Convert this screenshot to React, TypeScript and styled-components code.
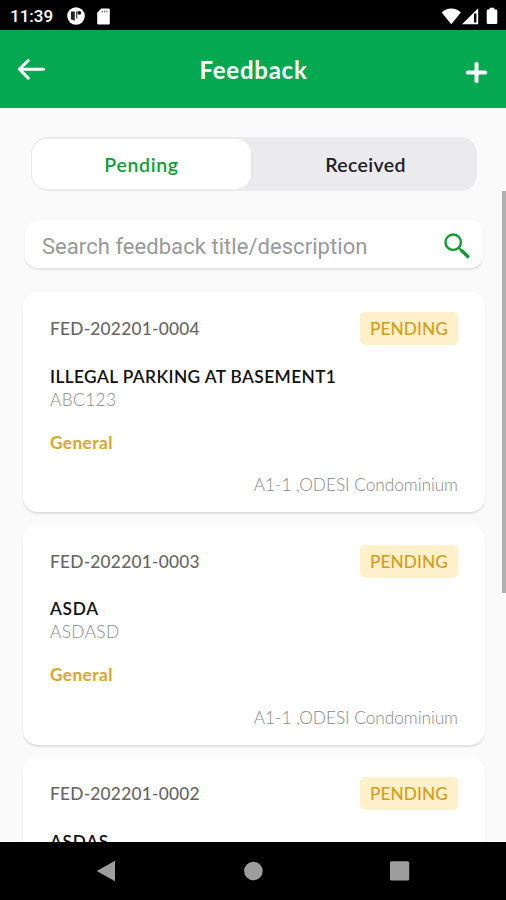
import React from "react";
import styled, { createGlobalStyle } from "styled-components";

const GlobalStyle = createGlobalStyle`
  * { box-sizing: border-box; }
  body { margin: 0; background: #000; }
  button { border: 0; padding: 0; background: none; font: inherit; color: inherit; }
  svg { display: block; }
`;

const Screen = styled.div`
  width: 506px;
  height: 900px;
  display: flex;
  flex-direction: column;
  overflow: hidden;
  background: #fafafa;
  font-family: Lato, "Open Sans", sans-serif;
`;

const StatusBar = styled.div`
  flex: none;
  height: 30px;
  padding: 2px 7px 0 10px;
  display: flex;
  align-items: center;
  background: #000;
  color: #fff;
`;

const Clock = styled.span`
  width: 57px;
  font: 500 17px/28px Roboto, sans-serif;
`;

const StatusIcons = styled.div`
  display: flex;
  align-items: center;
  gap: 12px;
`;

const SignalIcons = styled.div`
  margin-left: auto;
  display: flex;
  align-items: center;
`;

const Header = styled.header`
  flex: none;
  height: 77.5px;
  padding: 0 18px 0 17px;
  display: grid;
  grid-template-columns: 40px 1fr 38px;
  align-items: center;
  background: #04a850;
  color: #fff;
`;

const Title = styled.h1`
  margin: 3px 0 0;
  text-align: center;
  font-size: 24px;
  line-height: 30px;
  font-weight: 700;
  letter-spacing: 0.75px;
`;

const BackButton = styled.button``;

const AddButton = styled.button`
  justify-self: end;
  padding-top: 7px;
`;

const Content = styled.main`
  position: relative;
  flex: 1;
  min-height: 0;
  overflow: hidden;
`;

const Tabs = styled.div`
  margin: 29.5px 29px 0 30.5px;
  height: 53.5px;
  padding: 2px 2px 2px 1.5px;
  display: grid;
  grid-template-columns: 219px 1fr;
  border-radius: 17px;
  background: #ebebed;
`;

const Tab = styled.button<{ $active?: boolean }>`
  border-radius: 15px;
  padding: 1px 0 0 ${(p) => (p.$active ? 0 : 5)}px;
  font-size: 19.5px;
  font-weight: 600;
  letter-spacing: ${(p) => (p.$active ? 0.66 : 0.38)}px;
  color: ${(p) => (p.$active ? "#109f33" : "#202024")};
  background: ${(p) => (p.$active ? "#fff" : "transparent")};
`;

const SearchBox = styled.div`
  margin: 29.5px 23px 0 25px;
  height: 48px;
  padding: 0 13px 0 17px;
  display: flex;
  align-items: center;
  justify-content: space-between;
  border-radius: 13px;
  background: #fff;
  box-shadow: 0 2px 2px rgba(0, 0, 0, 0.1);
`;

const Placeholder = styled.span`
  padding-top: 6px;
  font: 400 22px/26px Roboto, sans-serif;
  letter-spacing: 0.05px;
  color: #999;
`;

const SearchButton = styled.button`
  padding-top: 3px;
`;

const List = styled.div`
  margin: 24px 21px 0 23px;
  display: flex;
  flex-direction: column;
  gap: 12.5px;
`;

const Card = styled.article`
  height: 220px;
  padding: 20px 27px 0 27px;
  border-radius: 15px;
  background: #fff;
  box-shadow: 0 2px 2px rgba(0, 0, 0, 0.11);
`;

const CardTop = styled.div`
  height: 33px;
  display: flex;
  align-items: center;
  justify-content: space-between;
`;

const Reference = styled.span`
  font-size: 17.3px;
  font-weight: 500;
  letter-spacing: 0.25px;
  color: #666;
`;

const Badge = styled.span`
  width: 98px;
  height: 33px;
  border-radius: 5px;
  background: #fef0cb;
  text-align: center;
  font-size: 17.3px;
  line-height: 33px;
  font-weight: 500;
  letter-spacing: 0.08px;
  color: #d39e1c;
`;

const Subject = styled.h2<{ $spacing: number }>`
  margin: 19.5px 0 0;
  font-size: 17.3px;
  line-height: 23px;
  font-weight: 600;
  letter-spacing: ${(p) => p.$spacing}px;
  color: #111;
`;

const Description = styled.p`
  margin: 0;
  font-size: 17.3px;
  line-height: 23px;
  font-weight: 300;
  letter-spacing: 0.4px;
  color: #888;
`;

const Category = styled.p`
  margin: 20px 0 0;
  font-size: 17.3px;
  line-height: 23px;
  font-weight: 700;
  letter-spacing: 0.4px;
  color: #dba629;
`;

const Unit = styled.p`
  margin: 19.5px 0 0;
  text-align: right;
  font-size: 17.3px;
  line-height: 23px;
  font-weight: 300;
  letter-spacing: -0.05px;
  color: #888;
`;

const ScrollThumb = styled.div`
  position: absolute;
  top: 83.5px;
  right: 0;
  width: 4px;
  height: 402px;
  background: #b1b1b1;
`;

const NavBar = styled.nav`
  flex: none;
  height: 58px;
  padding: 0 96px;
  display: flex;
  align-items: center;
  justify-content: space-between;
  background: #000;
  color: #9d9d9d;
`;

const items = [
  { id: "FED-202201-0004", subject: "ILLEGAL PARKING AT BASEMENT1", spacing: 0.4, text: "ABC123" },
  { id: "FED-202201-0003", subject: "ASDA", spacing: 0.7, text: "ASDASD" },
  { id: "FED-202201-0002", subject: "ASDAS", spacing: 0.7, text: "" },
];

const AppBadgeIcon = () => (
  <svg width="18" height="18" viewBox="0 0 18 18">
    <circle cx="9" cy="9" r="8.8" fill="#fff" />
    <path d="M3.9 4.4H7.8v9.4L3.9 12.2Z" fill="#222" />
    <path d="M9.2 4.3h1.1v7.2H9.2z" fill="#222" />
    <circle cx="12.3" cy="5.8" r="1.9" fill="#111" />
  </svg>
);

const SdCardIcon = () => (
  <svg width="13" height="17" viewBox="0 0 13 17">
    <path d="M4.3.5h7.2q1.3 0 1.3 1.3v13.4q0 1.3-1.3 1.3h-10Q.2 16.5.2 15.2V4.7Z" fill="#fff" />
    <path d="M5.3 2.4v2M7.6 2.4v2M9.9 2.4v2" stroke="#777" strokeWidth="1.2" />
  </svg>
);

const StatusGlyphs = () => (
  <svg width="58" height="18" viewBox="0 0 58 18">
    <path d="M.7 5.5C5.5.3 15 .3 19.8 5.5L10.3 17.2Z" fill="#fff" />
    <path d="M37.2 1.2V17.2H21Z" fill="#fff" />
    <path d="M33 6.5h2.4v9H33z" fill="#000" />
    <path d="M48.5.8h4.8v1.7H55q1.3 0 1.3 1.3v12q0 1.3-1.3 1.3h-8q-1.3 0-1.3-1.3v-12q0-1.3 1.3-1.3h1.5Z" fill="#fff" />
  </svg>
);

const BackIcon = () => (
  <svg width="30" height="24" viewBox="0 0 30 24" fill="none" stroke="#fff" strokeWidth="3" strokeLinecap="round" strokeLinejoin="round">
    <path d="M26.5 12.3H2.6M11.3 3.5 2.4 12.3 11.3 21.1" />
  </svg>
);

const PlusIcon = () => (
  <svg width="23" height="23" viewBox="0 0 23 23" stroke="#fff" strokeWidth="4" strokeLinecap="round">
    <path d="M11.5 2.7v17.6M2.7 11.5h17.6" />
  </svg>
);

const SearchIcon = () => (
  <svg width="26" height="26" viewBox="0 0 26 26" fill="none" stroke="#0c9b2d">
    <circle cx="9.2" cy="9.2" r="7.7" strokeWidth="2.4" />
    <path d="m14.8 14.8 2.2 2.2" strokeWidth="2" />
    <path d="m16.8 16.8 8 7.7" strokeWidth="3.3" />
  </svg>
);

const NavBackIcon = () => (
  <svg width="20" height="22" viewBox="0 0 20 22">
    <path d="M.7 11 19 .7v20.6Z" fill="currentColor" />
  </svg>
);

const NavHomeIcon = () => (
  <svg width="20" height="20" viewBox="0 0 20 20">
    <circle cx="10.4" cy="10" r="9.3" fill="currentColor" />
  </svg>
);

const NavRecentIcon = () => (
  <svg width="20" height="20" viewBox="0 0 20 20">
    <rect x="0" y=".3" width="19.2" height="19.2" rx="1.5" fill="currentColor" />
  </svg>
);

export default function App() {
  return (
    <>
      <GlobalStyle />
      <Screen>
        <StatusBar>
          <Clock>11:39</Clock>
          <StatusIcons>
            <AppBadgeIcon />
            <SdCardIcon />
          </StatusIcons>
          <SignalIcons>
            <StatusGlyphs />
          </SignalIcons>
        </StatusBar>
        <Header>
          <BackButton aria-label="Back"><BackIcon /></BackButton>
          <Title>Feedback</Title>
          <AddButton aria-label="Add"><PlusIcon /></AddButton>
        </Header>
        <Content>
          <Tabs>
            <Tab $active>Pending</Tab>
            <Tab>Received</Tab>
          </Tabs>
          <SearchBox>
            <Placeholder>Search feedback title/description</Placeholder>
            <SearchButton aria-label="Search"><SearchIcon /></SearchButton>
          </SearchBox>
          <List>
            {items.map((item) => (
              <Card key={item.id}>
                <CardTop>
                  <Reference>{item.id}</Reference>
                  <Badge>PENDING</Badge>
                </CardTop>
                <Subject $spacing={item.spacing}>{item.subject}</Subject>
                {item.text && (
                  <>
                    <Description>{item.text}</Description>
                    <Category>General</Category>
                    <Unit>A1-1 ,ODESI Condominium</Unit>
                  </>
                )}
              </Card>
            ))}
          </List>
          <ScrollThumb />
        </Content>
        <NavBar>
          <NavBackIcon />
          <NavHomeIcon />
          <NavRecentIcon />
        </NavBar>
      </Screen>
    </>
  );
}
